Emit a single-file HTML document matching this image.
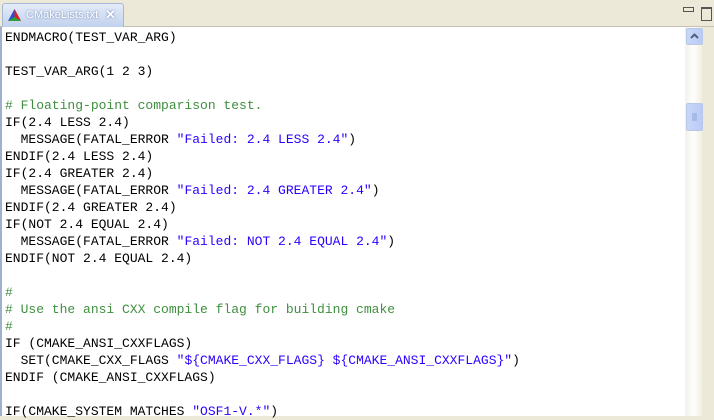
<!DOCTYPE html>
<html><head><style>
body{margin:0;width:714px;height:416px;overflow:hidden;background:#ece9d8;position:relative;font-family:"Liberation Sans",sans-serif}
.tabbar{position:absolute;left:0;top:0;width:714px;height:26px;background:#ece9d8;border-bottom:1px solid #c5c2b2}
.tab{position:absolute;left:2px;top:3px;width:120px;height:24px;background:linear-gradient(#e4ecf8,#c0d0ec);border:1px solid #a9b8d4;border-bottom:none;border-radius:3px 3px 0 0}
.tab span{position:absolute;left:23px;top:5px;font-size:11px;color:#fff;text-shadow:0 0 2px #5a78b0}
.editor{position:absolute;left:0;top:27px;width:685px;height:389px;background:#fff;border-left:2px solid #9fb0cf}
pre{margin:0;position:absolute;left:3px;top:2px;font-family:"Liberation Mono",monospace;font-size:13px;line-height:17px;color:#000}
.c{color:#3f8f3f}.s{color:#2a00ff}
.sb{position:absolute;left:685px;top:27px;width:17px;height:389px;background:linear-gradient(90deg,#f3f1ec,#fefefb,#f1efe2)}
.btn{position:absolute;left:686px;width:15px;border:1px solid #b8c8ea;border-radius:2px;background:linear-gradient(90deg,#c8d6f8,#b9cbf5)}
</style></head><body>
<div class="tabbar">
<div class="tab">
<svg style="position:absolute;left:5px;top:5px" width="13" height="13" viewBox="0 0 13 13"><polygon points="6.5,0 13,12 0,12" fill="#2a4fd0"/><polygon points="6.5,0 13,12 6.5,8" fill="#e02020"/><polygon points="0,12 6.5,8 13,12" fill="#30a030"/></svg>
<span>CMakeLists.txt</span>
<span style="left:102px;top:3px;font-size:13px;font-weight:bold">✕</span>
</div>
<div style="position:absolute;left:683px;top:7px;width:9px;height:3px;border:1px solid #555"></div>
<div style="position:absolute;left:701px;top:7px;width:9px;height:11px;border:1px solid #555;border-top-width:2px"></div>
</div>
<div class="editor"><pre>ENDMACRO(TEST_VAR_ARG)

TEST_VAR_ARG(1 2 3)

<span class="c"># Floating-point comparison test.</span>
IF(2.4 LESS 2.4)
  MESSAGE(FATAL_ERROR <span class="s">"Failed: 2.4 LESS 2.4"</span>)
ENDIF(2.4 LESS 2.4)
IF(2.4 GREATER 2.4)
  MESSAGE(FATAL_ERROR <span class="s">"Failed: 2.4 GREATER 2.4"</span>)
ENDIF(2.4 GREATER 2.4)
IF(NOT 2.4 EQUAL 2.4)
  MESSAGE(FATAL_ERROR <span class="s">"Failed: NOT 2.4 EQUAL 2.4"</span>)
ENDIF(NOT 2.4 EQUAL 2.4)

<span class="c">#</span>
<span class="c"># Use the ansi CXX compile flag for building cmake</span>
<span class="c">#</span>
IF (CMAKE_ANSI_CXXFLAGS)
  SET(CMAKE_CXX_FLAGS <span class="s">"${CMAKE_CXX_FLAGS} ${CMAKE_ANSI_CXXFLAGS}"</span>)
ENDIF (CMAKE_ANSI_CXXFLAGS)

IF(CMAKE_SYSTEM MATCHES <span class="s">"OSF1-V.*"</span>)</pre></div>
<div class="sb"></div>
<div class="btn" style="top:28px;height:15px"><svg width="15" height="15"><polyline points="4,9 7.5,5.5 11,9" fill="none" stroke="#4d6185" stroke-width="2"/></svg></div>
<div class="btn" style="top:103px;height:26px"><svg width="15" height="26"><path d="M5 10h5M5 12h5M5 14h5M5 16h5" stroke="#8fa3d8"/></svg></div>
</body></html>
